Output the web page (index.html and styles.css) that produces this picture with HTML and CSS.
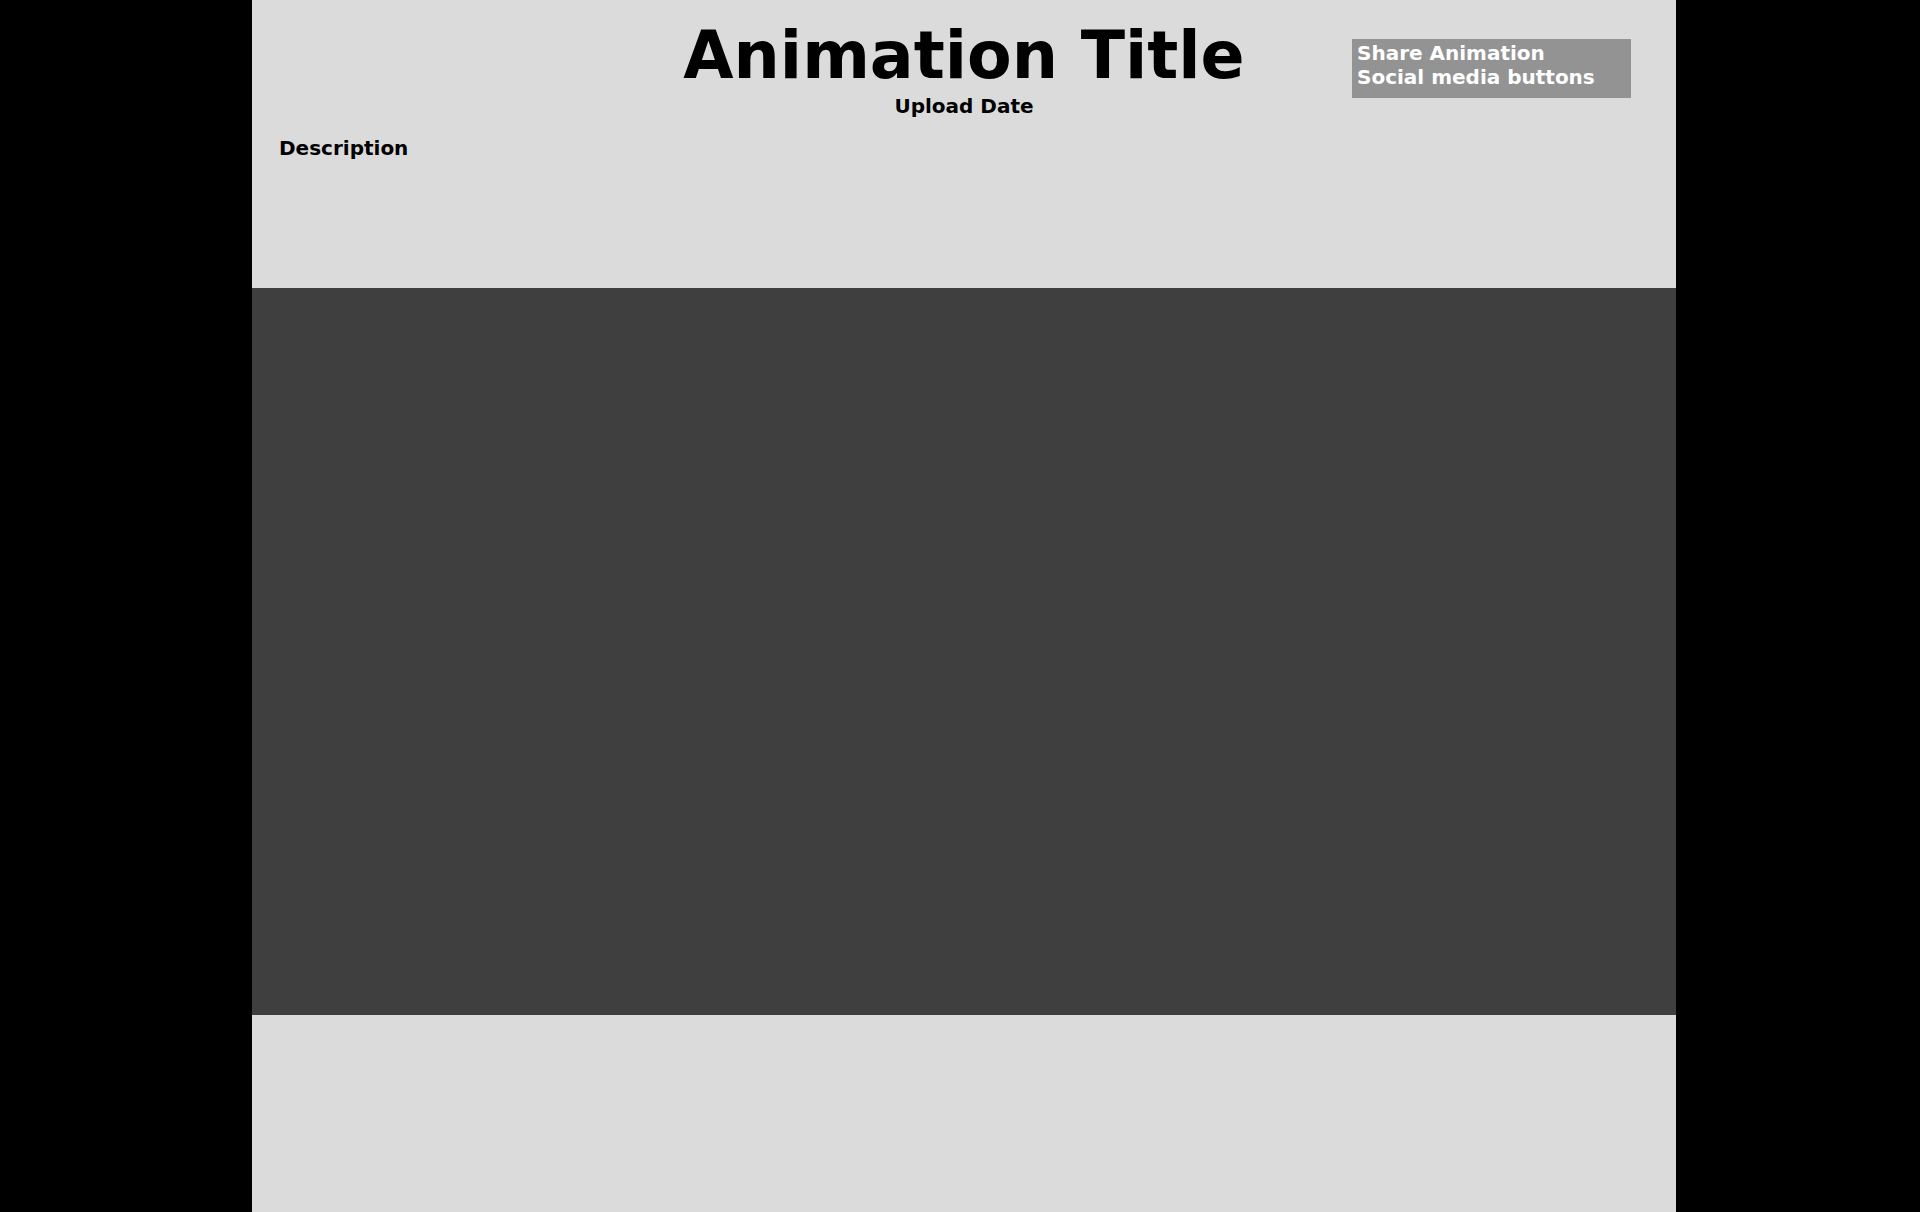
FILE: index.html
```html
<!DOCTYPE html>
<html lang="en">
<head>
<meta charset="utf-8">
<title>Animation Title</title>
<link rel="stylesheet" href="styles.css">
</head>
<body>
<div class="page">
  <header class="header">
    <div class="spacer"></div>
    <div class="title-block">
      <h1 class="title">Animation Title</h1>
      <div class="date">Upload Date</div>
    </div>
    <div class="share">
      <div>Share Animation</div>
      <div>Social media buttons</div>
    </div>
    <div class="description">Description</div>
  </header>
  <section class="player"></section>
  <footer class="footer"></footer>
</div>
</body>
</html>
```
FILE: styles.css
```css
html, body {
  margin: 0;
  padding: 0;
  height: 100%;
}
body {
  background: #000;
  font-family: "DejaVu Sans", Verdana, sans-serif;
  font-weight: bold;
  color: #000;
}
.page {
  width: 1424px;
  margin-left: 252px;
  min-height: 100%;
  display: flex;
  flex-direction: column;
  background: #dbdbdb;
}
.header {
  height: 288px;
  box-sizing: border-box;
  padding-top: 18px;
  display: grid;
  grid-template-columns: 1fr auto 1fr;
  align-items: start;
  align-content: start;
  background: #dbdbdb;
}
.title-block {
  text-align: center;
}
.title {
  margin: 0;
  font-size: 65px;
  line-height: normal;
  font-weight: bold;
}
.date {
  margin-top: 1px;
  font-size: 20px;
  line-height: normal;
}
.share {
  justify-self: end;
  margin-top: 21px;
  margin-right: 45px;
  width: 279px;
  height: 59px;
  box-sizing: border-box;
  padding: 2px 5px;
  background: #939393;
  color: #fff;
  font-size: 20px;
  line-height: normal;
}
.description {
  grid-column: 1 / -1;
  margin-top: 18px;
  padding-left: 27px;
  font-size: 20px;
  line-height: normal;
}
.player {
  height: 727px;
  background: #3f3f3f;
}
.footer {
  flex: 1;
  background: #dbdbdb;
}
```
